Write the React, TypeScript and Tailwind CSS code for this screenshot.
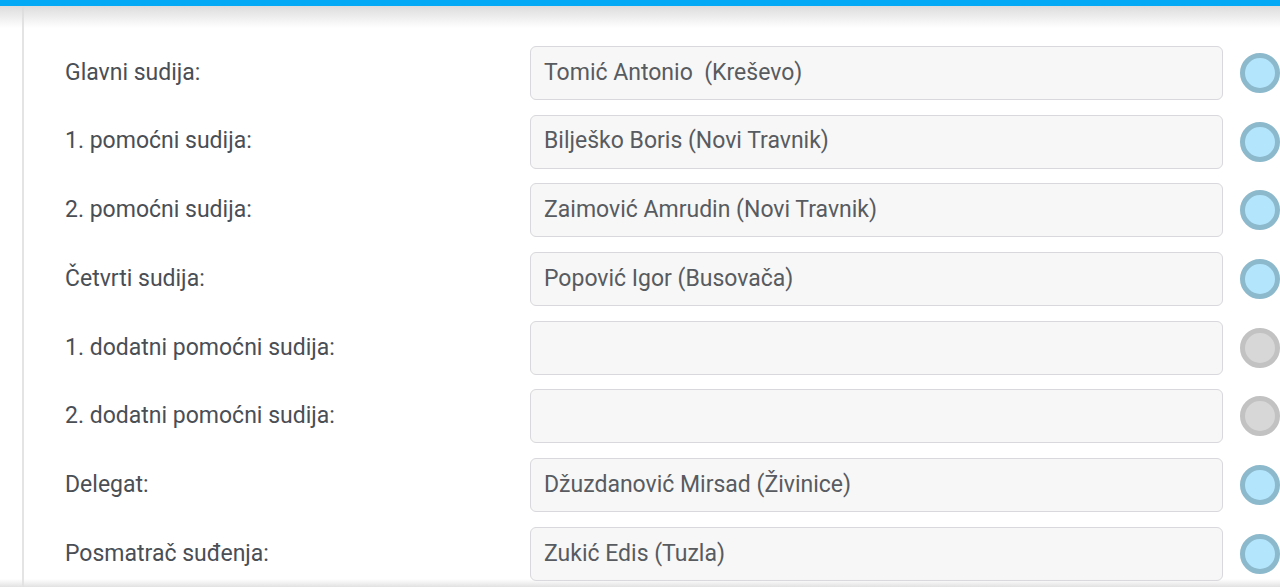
import React from "react";

const rows: { label: string; value: string; active: boolean }[] = [
  { label: "Glavni sudija:", value: "Tomić Antonio  (Kreševo)", active: true },
  { label: "1. pomoćni sudija:", value: "Bilješko Boris (Novi Travnik)", active: true },
  { label: "2. pomoćni sudija:", value: "Zaimović Amrudin (Novi Travnik)", active: true },
  { label: "Četvrti sudija:", value: "Popović Igor (Busovača)", active: true },
  { label: "1. dodatni pomoćni sudija:", value: "", active: false },
  { label: "2. dodatni pomoćni sudija:", value: "", active: false },
  { label: "Delegat:", value: "Džuzdanović Mirsad (Živinice)", active: true },
  { label: "Posmatrač suđenja:", value: "Zukić Edis (Tuzla)", active: true },
];

export default function App() {
  return (
    <div
      className="relative w-[1280px] h-[587px] overflow-hidden bg-white"
      style={{ fontFamily: "Roboto, 'Noto Sans', sans-serif" }}
    >
      <div className="h-[6px] bg-[#03a9f4]" />
      <div className="flex h-[581px]">
        <div className="w-[22px] shrink-0" />
        <div className="flex-1 border-l-2 border-[#e4e4e4] pl-[41px] pt-[40px]">
          <div className="flex flex-col gap-[14.7px]">
            {rows.map((r) => (
              <div key={r.label} className="flex items-center h-[54px]">
                <div className="w-[465px] shrink-0 text-[23px] text-[#4a4e55]">{r.label}</div>
                <div className="w-[693px] h-[54px] shrink-0 rounded-[6px] border border-[#d8d8dd] bg-[#f7f7f7] flex items-center px-[13px] text-[23px] text-[#585b60] whitespace-pre">
                  {r.value}
                </div>
                <div
                  className={
                    "ml-[17px] w-[40px] h-[40px] shrink-0 rounded-full border-[5px] " +
                    (r.active ? "border-[#8db9cc] bg-[#b3e5fc]" : "border-[#c2c2c2] bg-[#d7d7d7]")
                  }
                />
              </div>
            ))}
          </div>
        </div>
      </div>
      <div className="pointer-events-none absolute left-0 right-0 top-[6px] h-[22px] bg-gradient-to-b from-[#dcdcdc] to-transparent" />
      <div className="pointer-events-none absolute left-0 right-0 bottom-0 h-[8px] bg-gradient-to-b from-transparent to-[#e2e2e2]" />
    </div>
  );
}
